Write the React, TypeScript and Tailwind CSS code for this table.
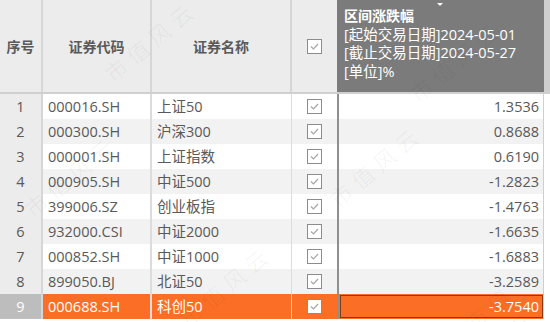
import React from 'react';

interface Row {
  code: string;
  name: string;
  value: string;
}

const rows: Row[] = [
  { code: '000016.SH', name: '上证50', value: '1.3536' },
  { code: '000300.SH', name: '沪深300', value: '0.8688' },
  { code: '000001.SH', name: '上证指数', value: '0.6190' },
  { code: '000905.SH', name: '中证500', value: '-1.2823' },
  { code: '399006.SZ', name: '创业板指', value: '-1.4763' },
  { code: '932000.CSI', name: '中证2000', value: '-1.6635' },
  { code: '000852.SH', name: '中证1000', value: '-1.6883' },
  { code: '899050.BJ', name: '北证50', value: '-3.2589' },
  { code: '000688.SH', name: '科创50', value: '-3.7540' },
];

const CheckBox = () => (
  <div className="w-[15px] h-[15px] border border-[#8c8c8c] bg-white flex items-center justify-center">
    <svg width="9" height="7" viewBox="0 0 9 7" fill="none">
      <path d="M1 3.5 L3.5 6 L8 1" stroke="#a6a6a6" strokeWidth="1.2" />
    </svg>
  </div>
);

// faint diagonal watermark
const marks = [
  { x: 95, y: 25 }, { x: 400, y: 45 },
  { x: 15, y: 160 }, { x: 320, y: 150 },
  { x: 170, y: 270 }, { x: 470, y: 280 },
];

export default function App() {
  return (
    <div className="relative w-[550px] h-[322px] overflow-hidden bg-white text-[14.5px] text-[#595959]" style={{ fontFamily: '"Open Sans", "Noto Sans CJK SC", sans-serif' }}>
      {/* Header */}
      <div className="flex h-[94px] border-b-2 border-[#cfcfcf]">
        <div className="w-[43px] bg-[#ececec] border-r-2 border-[#d6d6d6] flex items-center justify-center font-bold text-[14px] text-[#5a5a5a]">序号</div>
        <div className="w-[109px] bg-[#ececec] border-r-2 border-[#d6d6d6] flex items-center justify-center font-bold text-[14px] text-[#5a5a5a]">证券代码</div>
        <div className="w-[140px] bg-[#ececec] border-r-2 border-[#d6d6d6] flex items-center justify-center font-bold text-[14px] text-[#5a5a5a]">证券名称</div>
        <div className="w-[45px] bg-[#ececec] flex items-center justify-center">
          <CheckBox />
        </div>
        <div className="relative w-[207px] bg-[#7b7b7b] text-white pl-[7px] pt-[7px] leading-[18.5px] text-[14.5px] whitespace-nowrap">
          <div className="absolute left-[100px] top-[3px] w-0 h-0 border-l-[3px] border-r-[3px] border-t-[3px] border-l-transparent border-r-transparent border-t-white" />
          <div className="font-bold text-[14px]">区间涨跌幅</div>
          <div>[起始交易日期]2024-05-01</div>
          <div>[截止交易日期]2024-05-27</div>
          <div>[单位]%</div>
        </div>
        <div className="flex-1 bg-[#cfcfcf]" />
      </div>

      {/* Rows */}
      {rows.map((r, i) => {
        const selected = i === rows.length - 1;
        const zebra = i % 2 === 1 ? 'bg-[#f2f2f2]' : 'bg-white';
        const rowBg = selected ? 'bg-[#fb6e25] text-white' : zebra;
        return (
          <div key={r.code} className="flex h-[25px] whitespace-nowrap">
            <div className={`w-[43px] border-r-2 border-[#d6d6d6] flex items-center justify-center ${selected ? 'bg-[#bdbdbd] text-white' : 'bg-[#ececec]'}`}>{i + 1}</div>
            <div className={`w-[109px] border-r-2 border-[#dcdcdc] flex items-center pl-[5px] ${rowBg}`}>{r.code}</div>
            <div className={`w-[140px] border-r border-[#dcdcdc] flex items-center pl-[5px] ${rowBg}`}>{r.name}</div>
            <div className={`w-[45px] flex items-center justify-center ${rowBg}`}>
              <CheckBox />
            </div>
            <div className={`w-[207px] border-l-2 border-[#8f8f8f] border-r border-r-[#cfcfcf] ${rowBg} flex items-center`}>
              {selected ? (
                <div className="flex-1 h-[23px] ml-[1px] border border-[#8a3a12] flex items-center justify-end pr-[3px]">{r.value}</div>
              ) : (
                <div className="flex-1 text-right pr-[4px]">{r.value}</div>
              )}
            </div>
            <div className="flex-1 bg-white" />
          </div>
        );
      })}

      {/* Watermarks */}
      {marks.map((m, i) => (
        <div
          key={i}
          className="absolute text-[22px] text-[#000000]/[0.04] rotate-[-40deg] pointer-events-none tracking-[6px]"
          style={{ left: m.x, top: m.y }}
        >
          市值风云
        </div>
      ))}
    </div>
  );
}
